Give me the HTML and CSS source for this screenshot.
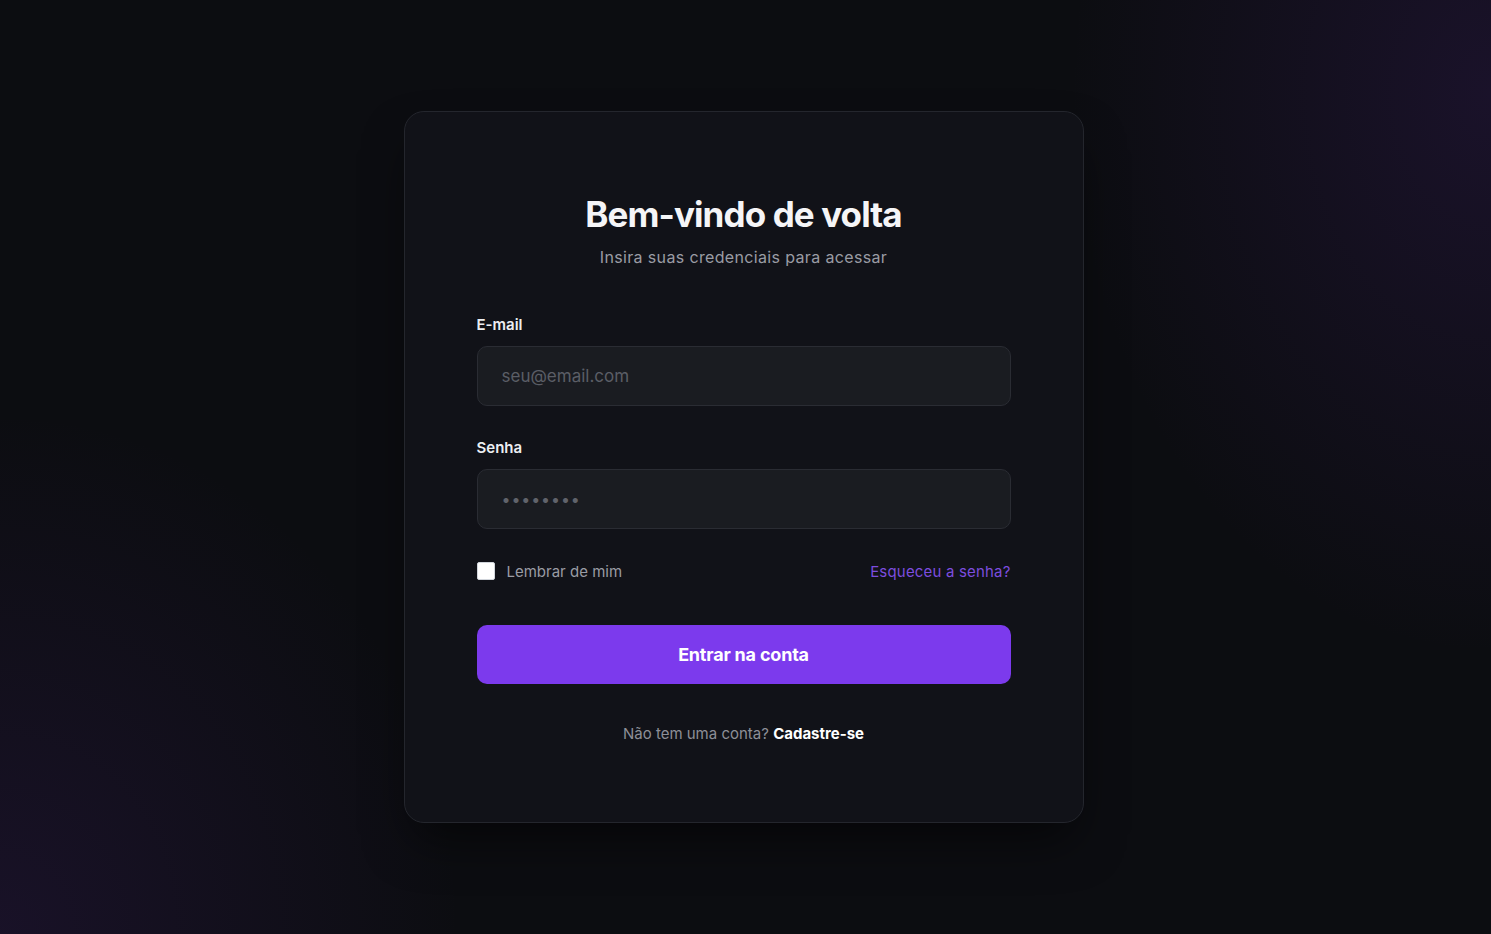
FILE: index.html
```html
<!DOCTYPE html>
<html lang="pt-BR">
<head>
<meta charset="utf-8">
<title>Login</title>
<link rel="stylesheet" href="styles.css">
</head>
<body>
<main class="page">
  <section class="card">
    <header class="card-header">
      <h1 class="title">Bem-vindo de volta</h1>
      <p class="subtitle">Insira suas credenciais para acessar</p>
    </header>
    <form class="form">
      <div class="field">
        <label class="label" for="email">E-mail</label>
        <input class="input" id="email" type="email" placeholder="seu@email.com">
      </div>
      <div class="field">
        <label class="label" for="senha">Senha</label>
        <input class="input input-pass" id="senha" type="password" placeholder="••••••••">
      </div>
      <div class="row">
        <label class="remember"><span class="check"></span>Lembrar de mim</label>
        <a class="forgot" href="#">Esqueceu a senha?</a>
      </div>
      <button class="btn" type="button">Entrar na conta</button>
    </form>
    <p class="footer">Não tem uma conta? <a class="signup" href="#">Cadastre-se</a></p>
  </section>
</main>
</body>
</html>
```

FILE: styles.css
```css
* { box-sizing: border-box; }
html, body { margin: 0; height: 100%; }
body {
  font-family: Inter, "Noto Sans", "Liberation Sans", sans-serif;
  background-color: #0c0d11;
  background-image:
    radial-gradient(ellipse 420px 560px at 100% 10%, rgba(76, 36, 130, 0.22), rgba(76, 36, 130, 0) 100%),
    radial-gradient(ellipse 460px 520px at 0% 100%, rgba(76, 36, 130, 0.2), rgba(76, 36, 130, 0) 100%);
  color: #f4f4f6;
}
.page {
  min-height: 100vh;
  padding-right: 4px;
  display: flex;
  align-items: center;
  justify-content: center;
}
.card {
  width: 680px;
  height: 712px;
  padding: 81px 72px 78px;
  background: #111218;
  border: 1px solid #24262d;
  border-radius: 20px;
  box-shadow: 0 25px 50px -12px rgba(0, 0, 0, 0.6);
  display: flex;
  flex-direction: column;
}
.card-header { text-align: center; margin-bottom: 46px; }
.title {
  margin: 0;
  font-size: 35px;
  line-height: 43px;
  font-weight: 700;
  letter-spacing: -0.9px;
  color: #f5f5f7;
}
.subtitle {
  margin: 9px 0 0;
  font-size: 16px;
  line-height: 24px;
  letter-spacing: 0.35px;
  color: #9a9ca4;
}
.form { display: flex; flex-direction: column; }
.field { display: flex; flex-direction: column; gap: 11px; margin-bottom: 32px; }
.label {
  font-size: 15px;
  line-height: 20px;
  font-weight: 600;
  color: #eceef2;
}
.input {
  height: 60px;
  width: 100%;
  padding: 0 24px;
  background: #1a1c21;
  border: 1px solid #2a2c33;
  border-radius: 10px;
  font-family: inherit;
  font-size: 17px;
  color: #e5e7eb;
  outline: none;
}
.input::placeholder { color: #5b5e66; }
.input-pass::placeholder { font-size: 16px; letter-spacing: 0.9px; color: #60636b; }
.row {
  display: flex;
  align-items: center;
  justify-content: space-between;
  height: 20px;
}
.remember {
  display: flex;
  align-items: center;
  gap: 12px;
  font-size: 15px;
  color: #9a9ca4;
}
.check {
  width: 18px;
  height: 18px;
  background: #ffffff;
  border: 1px solid #d1d5db;
  border-radius: 2px;
}
.forgot {
  font-size: 15px;
  letter-spacing: 0.18px;
  color: #7c4ddf;
  text-decoration: none;
}
.btn {
  margin-top: 44px;
  height: 59px;
  width: 100%;
  border: none;
  border-radius: 10px;
  background: #7c3aed;
  color: #ffffff;
  font-family: inherit;
  font-size: 18px;
  font-weight: 700;
  letter-spacing: -0.2px;
}
.footer {
  margin: 40px 0 0;
  text-align: center;
  font-size: 15px;
  line-height: 20px;
  color: #8d8f97;
}
.signup {
  color: #ffffff;
  font-weight: 700;
  text-decoration: none;
}
```
